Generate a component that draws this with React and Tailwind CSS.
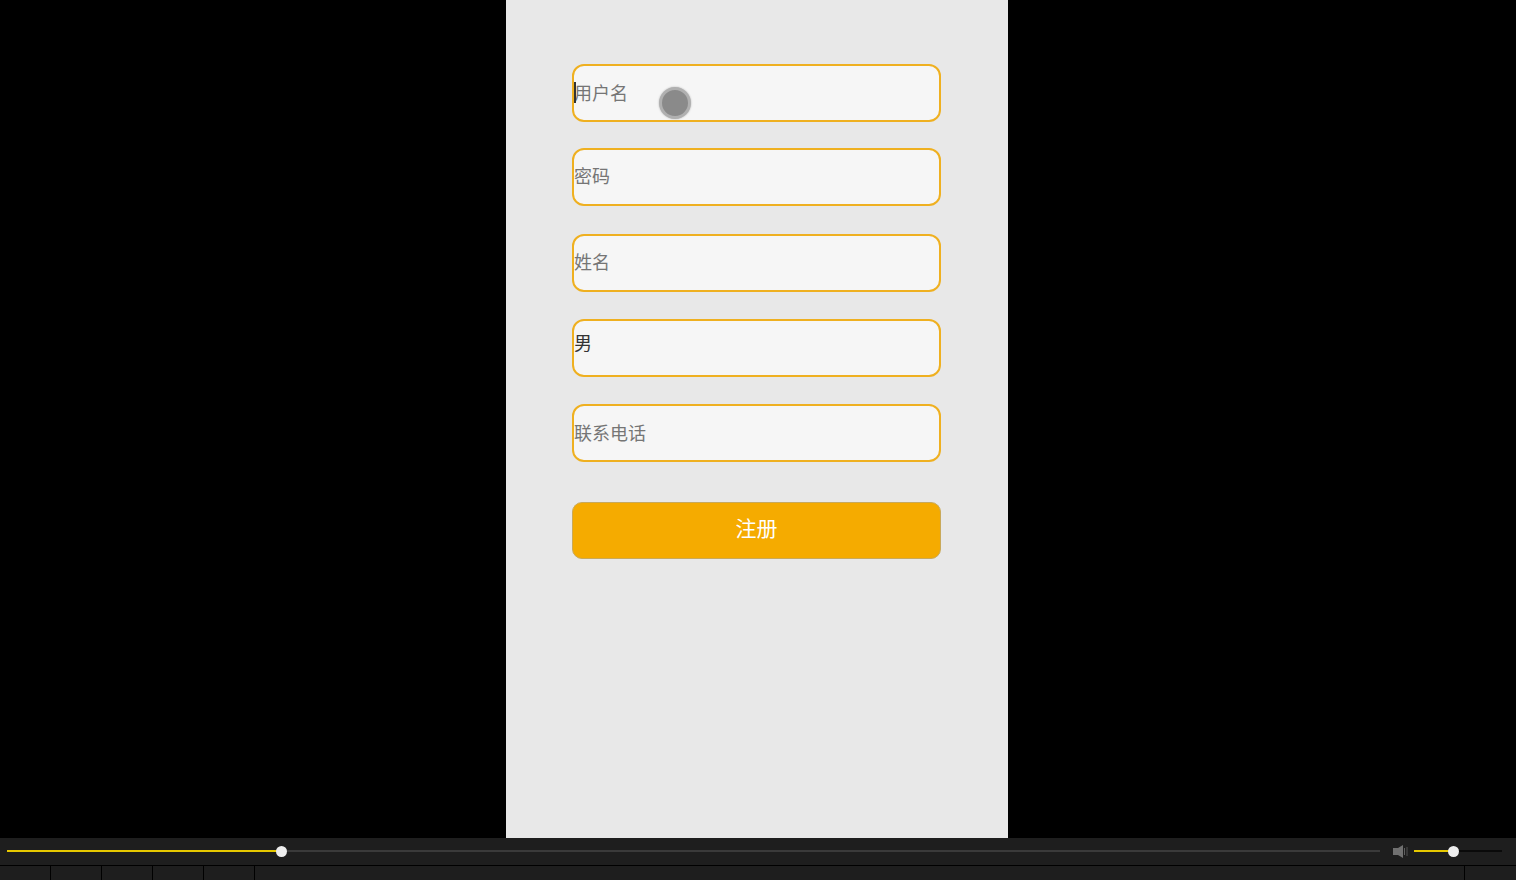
const font = { fontFamily: '"Liberation Sans", "Noto Sans CJK SC", sans-serif' };

function Field({ label, className = "", dark, top, low, children }) {
  return (
    <div className={`relative w-[369px] h-[58px] rounded-[12px] border-2 border-[#efb020] bg-[#f6f6f6] flex ${top ? "items-start pt-[10px]" : "items-center"} ${low ? "pt-[2px]" : ""} ${className}`}>
      <span className={`text-[18px] leading-[26px] ${dark ? "text-[#333333]" : "text-[#757575]"}`}>{label}</span>
      {children}
    </div>
  );
}

function VolumeIcon() {
  return (
    <svg width="15" height="13" viewBox="0 0 15 13" className="block">
      <path d="M0 3h5L10 0v13L5 10H0z" fill="#707070" />
      <rect x="11" y="3" width="1" height="7" fill="#606060" />
      <rect x="13.5" y="2" width="1" height="9" fill="#505050" />
    </svg>
  );
}

function Slider({ className, fill, knob, trackColor }) {
  return (
    <div className={`relative h-[11px] flex items-start pt-[4px] ${className}`}>
      <div className={`h-[2px] bg-[#e6c800] ${fill}`} />
      <div className={`flex-1 h-[2px] ${trackColor}`} />
      <span className={`absolute top-0 w-[11px] h-[11px] rounded-full bg-[#eeeeee] ${knob}`} />
    </div>
  );
}

export default function App() {
  return (
    <div className="w-[1516px] h-[880px] bg-black flex flex-col overflow-hidden" style={font}>
      {/* phone screen */}
      <div className="h-[838px] flex justify-center pr-[2px]">
        <div className="w-[502px] h-full bg-[#e8e8e8] pt-[64px] pl-[66px]">
          <Field label="用户名" low>
            <span className="absolute left-[0px] top-[16px] w-[2px] h-[21px] bg-[#333333]" />
            <span className="absolute left-[85px] top-[21px] w-[32px] h-[32px] rounded-full bg-[#8a8a8a] border-[3px] border-[#b0b0b0] shadow-[0_0_2px_#b0b0b0]" />
          </Field>
          <Field label="密码" className="mt-[26px]" />
          <Field label="姓名" className="mt-[28px]" />
          <Field label="男" dark top className="mt-[27px]" />
          <Field label="联系电话" low className="mt-[27px]" />
          <button className="mt-[40px] w-[369px] h-[57px] rounded-[10px] bg-[#f5ab00] border border-[#c9a95a] text-white text-[21px] leading-[52px] flex justify-center">
            注册
          </button>
        </div>
      </div>

      {/* player controls */}
      <div className="h-[27px] bg-[#1e1e1e] flex items-center pl-[7px] pr-[14px]">
        <Slider className="w-[1373px]" fill="w-[274px]" knob="left-[269px]" trackColor="bg-[#3a3a3a]" />
        <div className="ml-[13px]">
          <VolumeIcon />
        </div>
        <Slider className="ml-[6px] w-[88px]" fill="w-[39px]" knob="left-[34px]" trackColor="bg-[#0a0a0a]" />
      </div>

      {/* tabs */}
      <div className="flex-1 bg-[#1e1e1e] border-t border-black flex">
        <div className="w-[51px] border-r border-black" />
        <div className="w-[51px] border-r border-black" />
        <div className="w-[51px] border-r border-black" />
        <div className="w-[51px] border-r border-black" />
        <div className="w-[51px] border-r border-black" />
        <div className="w-[1210px] border-r border-black" />
      </div>
    </div>
  );
}
